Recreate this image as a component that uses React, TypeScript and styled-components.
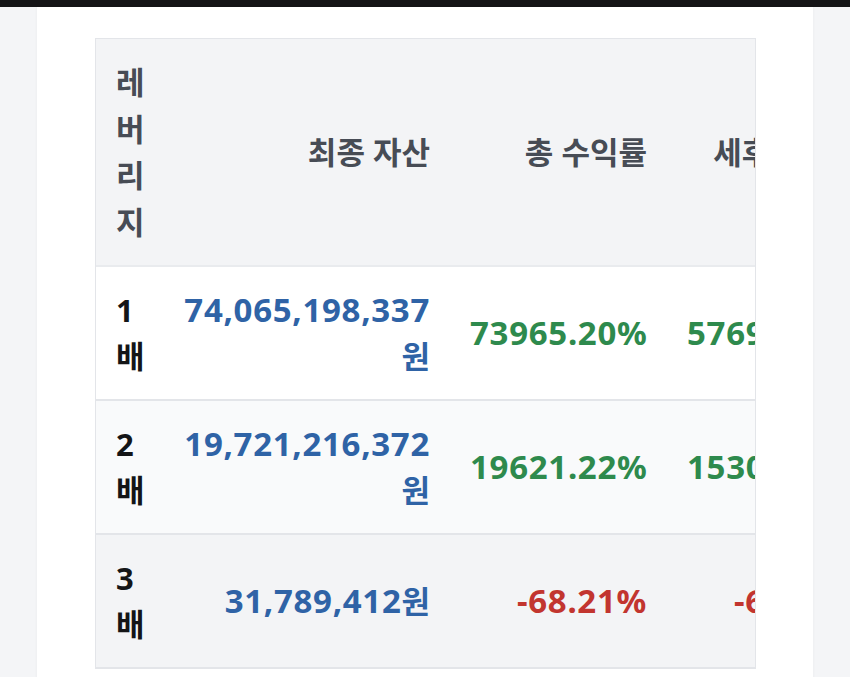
import styled, { createGlobalStyle } from 'styled-components';

type Row = {
  leverage: string;
  finalAsset: string;
  totalReturn: string;
  afterTax: string;
  mdd: string;
  positive: boolean;
};

const rows: Row[] = [
  {
    leverage: '1배',
    finalAsset: '74,065,198,337',
    totalReturn: '73965.20%',
    afterTax: '57693.14%',
    mdd: '-33.72%',
    positive: true,
  },
  {
    leverage: '2배',
    finalAsset: '19,721,216,372',
    totalReturn: '19621.22%',
    afterTax: '15304.89%',
    mdd: '-61.08%',
    positive: true,
  },
  {
    leverage: '3배',
    finalAsset: '31,789,412',
    totalReturn: '-68.21%',
    afterTax: '-69.85%',
    mdd: '-97.40%',
    positive: false,
  },
];

const App = () => {
  return (
    <>
      <GlobalStyle />
      <TopBar />
      <Page>
        <Card>
          <TableWrap>
            <Table>
              <colgroup>
                <Col $w={64} />
                <Col $w={290} />
                <Col $w={217} />
                <Col $w={217} />
                <Col $w={217} />
              </colgroup>
              <thead>
                <tr>
                  <Th $align="left">레버리지</Th>
                  <Th>최종 자산</Th>
                  <Th>총 수익률</Th>
                  <Th>세후 수익률</Th>
                  <Th>최대 낙폭</Th>
                </tr>
              </thead>
              <tbody>
                {rows.map((r, i) => (
                  <Tr key={r.leverage} $index={i}>
                    <LevCell>{r.leverage}</LevCell>
                    <AssetCell>
                      <Num>{r.finalAsset}</Num>원
                    </AssetCell>
                    <RateCell $positive={r.positive}>
                      <Num>{r.totalReturn}</Num>
                    </RateCell>
                    <RateCell $positive={r.positive}>
                      <Num>{r.afterTax}</Num>
                    </RateCell>
                    <RateCell $positive={false}>
                      <Num>{r.mdd}</Num>
                    </RateCell>
                  </Tr>
                ))}
              </tbody>
            </Table>
          </TableWrap>
        </Card>
      </Page>
    </>
  );
};

export default App;

const GlobalStyle = createGlobalStyle`
  html, body {
    margin: 0;
    padding: 0;
    background: #f4f5f7;
    font-family: "Noto Sans", "Noto Sans CJK KR", sans-serif;
  }
`;

const TopBar = styled.div`
  height: 7px;
  background: #141416;
`;

const Page = styled.div`
  padding: 0 37px;
`;

const Card = styled.div`
  background: #ffffff;
  min-height: 680px;
  padding: 31px 57px 40px 58px;
  box-shadow: 0 0 3px rgba(0, 0, 0, 0.05);
`;

const TableWrap = styled.div`
  overflow-x: auto;
  scrollbar-width: none;
  border: 1px solid #e3e5e9;
  border-bottom: none;
`;

const Table = styled.table`
  border-collapse: collapse;
  table-layout: fixed;
  width: 1005px;
`;

const Col = styled.col<{ $w: number }>`
  width: ${(p) => p.$w}px;
`;

const Th = styled.th<{ $align?: 'left' | 'right' }>`
  background: #f3f4f6;
  color: #474c55;
  font-size: 31px;
  font-weight: 700;
  line-height: 46.5px;
  padding: 20px;
  text-align: ${(p) => p.$align ?? 'right'};
  vertical-align: middle;
  border-bottom: 2px solid #e9ebee;
`;

const Tr = styled.tr<{ $index: number }>`
  background: ${(p) =>
    p.$index === 0 ? '#ffffff' : p.$index === 1 ? '#f9fafb' : '#f3f4f6'};
  border-bottom: 2px solid #e3e5e9;
`;

const Td = styled.td`
  font-size: 31px;
  font-weight: 700;
  line-height: 46px;
  padding: 20px;
  text-align: right;
  vertical-align: middle;
`;

const LevCell = styled(Td)`
  text-align: left;
  color: #141517;
`;

const AssetCell = styled(Td)`
  color: #2f63a6;
`;

const RateCell = styled(Td)<{ $positive: boolean }>`
  color: ${(p) => (p.$positive ? '#2e8a4d' : '#c2352f')};
  white-space: nowrap;
`;

const Num = styled.span`
  font-size: 33px;
  letter-spacing: 0.7px;
`;
